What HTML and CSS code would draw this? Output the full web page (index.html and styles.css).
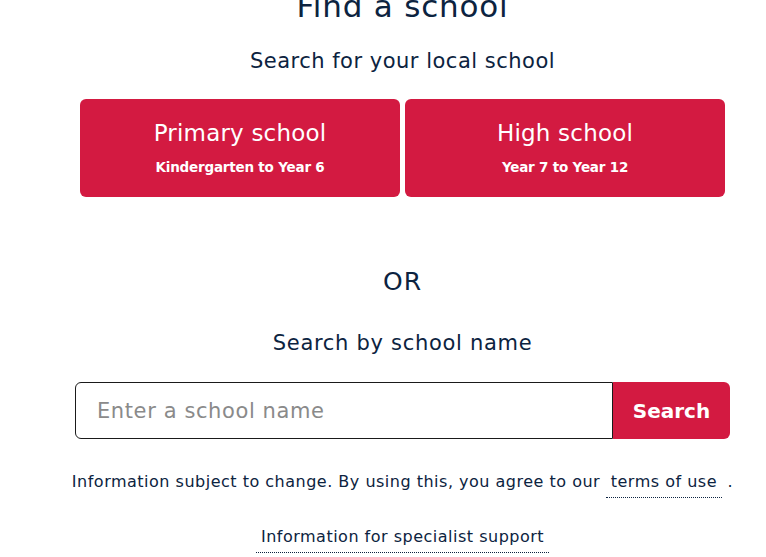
FILE: index.html
```html
<!DOCTYPE html>
<html lang="en">
<head>
<meta charset="utf-8">
<title>Find a school</title>
<link rel="stylesheet" href="styles.css">
</head>
<body>
<main class="page">
  <h1 class="title">Find a school</h1>
  <h2 class="subtitle">Search for your local school</h2>
  <div class="choices">
    <a class="choice" href="#">
      <span class="choice-title">Primary school</span>
      <span class="choice-sub">Kindergarten to Year 6</span>
    </a>
    <a class="choice" href="#">
      <span class="choice-title">High school</span>
      <span class="choice-sub">Year 7 to Year 12</span>
    </a>
  </div>
  <p class="or">OR</p>
  <h2 class="subtitle by-name">Search by school name</h2>
  <form class="search">
    <input class="search-input" type="text" placeholder="Enter a school name">
    <button class="search-btn" type="button">Search</button>
  </form>
  <p class="note">Information subject to change. By using this, you agree to our <a class="dotted" href="#">terms of use</a> .</p>
  <p class="note support"><a class="dotted" href="#">Information for specialist support</a></p>
</main>
</body>
</html>
```
FILE: styles.css
```css
* { box-sizing: border-box; }
html, body { margin: 0; padding: 0; background: #fff; }
body {
  font-family: "DejaVu Sans", "Open Sans", sans-serif;
  color: #0c2340;
  width: 766px;
  height: 557px;
  overflow: hidden;
}
.page {
  width: 655px;
  margin: -14px 0 0 75px;
  display: flex;
  flex-direction: column;
  align-items: center;
}
.title {
  margin: 0;
  font-size: 31px;
  font-weight: 400;
  line-height: 40px;
  letter-spacing: 0.8px;
}
.subtitle {
  margin: 21px 0 0;
  font-size: 21px;
  font-weight: 400;
  line-height: 28px;
  letter-spacing: 0.5px;
}
.choices {
  margin-top: 24px;
  width: 645px;
  display: grid;
  grid-template-columns: 1fr 1fr;
  gap: 5px;
}
.choice {
  height: 98px;
  background: #d31a41;
  border-radius: 6px;
  color: #fff;
  text-decoration: none;
  display: flex;
  flex-direction: column;
  align-items: center;
  padding-top: 19px;
}
.choice-title {
  font-size: 23px;
  font-weight: 500;
  line-height: 30px;
  letter-spacing: 0.2px;
}
.choice-sub {
  margin-top: 10px;
  font-size: 13.5px;
  font-weight: 700;
  line-height: 18px;
  letter-spacing: -0.2px;
}
.or {
  margin: 68px 0 0;
  font-size: 25px;
  line-height: 34px;
  letter-spacing: 1px;
}
.by-name { margin-top: 30px; letter-spacing: 0.7px; }
.search {
  margin-top: 25px;
  width: 655px;
  display: flex;
  height: 57px;
}
.search-input {
  flex: 1;
  border: 1px solid #1a1a1a;
  border-radius: 6px 0 0 6px;
  padding: 0 0 0 21px;
  font-family: inherit;
  font-size: 21px;
  letter-spacing: 0.6px;
  color: #333;
  outline: none;
}
.search-input::placeholder { color: #8a8a8a; }
.search-btn {
  width: 117px;
  border: 0;
  background: #d31a41;
  color: #fff;
  border-radius: 0 6px 6px 0;
  font-family: inherit;
  font-size: 20px;
  font-weight: 700;
  padding: 0;
}
.note {
  margin: 32px 0 0;
  font-size: 16px;
  line-height: 22px;
  letter-spacing: 0.5px;
  text-align: center;
  white-space: nowrap;
}
.support { margin-top: 33px; }
.dotted {
  color: inherit;
  text-decoration: none;
  border-bottom: 1px dotted #0c2340;
  padding: 0 5px 6px;
}
```
